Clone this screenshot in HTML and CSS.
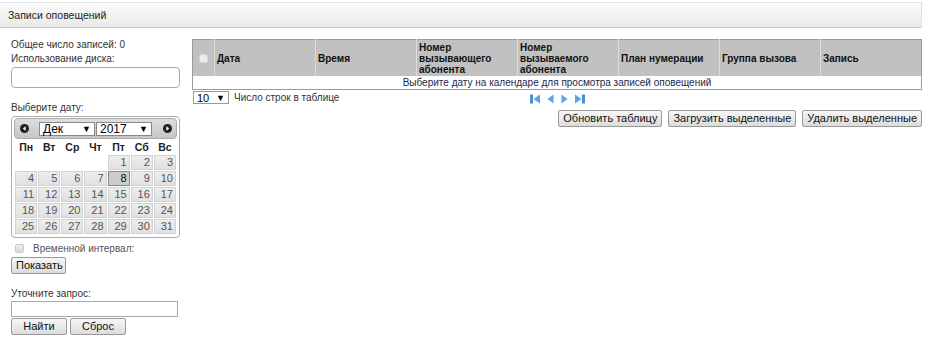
FILE: index.html
```html
<!DOCTYPE html>
<html lang="ru">
<head>
    <meta charset="UTF-8">
    <title>Записи оповещений</title>
    <link rel="stylesheet" href="styles.css">
</head>
<body>
    <div class="titlebar">Записи оповещений</div>

    <div class="main">
        <div class="sidebar">
            <div class="line">Общее число записей: 0</div>
            <div class="line">Использование диска:</div>
            <div class="disk"></div>

            <div class="label">Выберите дату:</div>
            <div class="calendar">
                <div class="cal-head">
                    <span class="cal-nav">
                        <svg width="9" height="9" viewBox="0 0 9 9"><circle cx="4.5" cy="4.5" r="4.5" fill="#222"/><path d="M5.6 2.2 L2.8 4.5 L5.6 6.8 Z" fill="#fff"/></svg>
                    </span>
                    <span class="fake-select month">Дек</span>
                    <span class="fake-select year">2017</span>
                    <span class="cal-nav">
                        <svg width="9" height="9" viewBox="0 0 9 9"><circle cx="4.5" cy="4.5" r="4.5" fill="#222"/><path d="M3.4 2.2 L6.2 4.5 L3.4 6.8 Z" fill="#fff"/></svg>
                    </span>
                </div>
                <table class="cal-grid">
                    <thead>
                        <tr><th>Пн</th><th>Вт</th><th>Ср</th><th>Чт</th><th>Пт</th><th>Сб</th><th>Вс</th></tr>
                    </thead>
                    <tbody>
                        <tr><td class="empty"></td><td class="empty"></td><td class="empty"></td><td class="empty"></td><td>1</td><td>2</td><td>3</td></tr>
                        <tr><td>4</td><td>5</td><td>6</td><td>7</td><td class="active">8</td><td>9</td><td>10</td></tr>
                        <tr><td>11</td><td>12</td><td>13</td><td>14</td><td>15</td><td>16</td><td>17</td></tr>
                        <tr><td>18</td><td>19</td><td>20</td><td>21</td><td>22</td><td>23</td><td>24</td></tr>
                        <tr><td>25</td><td>26</td><td>27</td><td>28</td><td>29</td><td>30</td><td>31</td></tr>
                    </tbody>
                </table>
            </div>

            <label class="interval"><input type="checkbox" class="check"> Временной интервал:</label>
            <button class="btn">Показать</button>

            <div class="label query-label">Уточните запрос:</div>
            <input type="text" class="query">
            <div class="btn-row">
                <button class="btn wide">Найти</button>
                <button class="btn wide">Сброс</button>
            </div>
        </div>

        <div class="content">
            <table class="records">
                <thead>
                    <tr>
                        <th class="col-check"><input type="checkbox" class="check"></th>
                        <th>Дата</th>
                        <th>Время</th>
                        <th>Номер вызывающего абонента</th>
                        <th>Номер вызываемого абонента</th>
                        <th>План нумерации</th>
                        <th>Группа вызова</th>
                        <th>Запись</th>
                    </tr>
                </thead>
                <tbody>
                    <tr><td colspan="8" class="empty-row">Выберите дату на календаре для просмотра записей оповещений</td></tr>
                </tbody>
            </table>

            <div class="pager-row">
                <div class="rows">
                    <span class="fake-select count">10</span>
                    <span>Число строк в таблице</span>
                </div>
                <div class="pager">
                    <svg width="10" height="10" viewBox="0 0 10 10"><rect x="0" y="0.5" width="3" height="9" fill="#4a90d9"/><path d="M10 0.5 L3.5 5 L10 9.5 Z" fill="#5fa3e6"/></svg>
                    <svg width="7" height="10" viewBox="0 0 7 10"><path d="M6.5 0.5 L0.5 5 L6.5 9.5 Z" fill="#5fa3e6"/></svg>
                    <svg width="7" height="10" viewBox="0 0 7 10"><path d="M0.5 0.5 L6.5 5 L0.5 9.5 Z" fill="#5fa3e6"/></svg>
                    <svg width="10" height="10" viewBox="0 0 10 10"><path d="M0 0.5 L6.5 5 L0 9.5 Z" fill="#5fa3e6"/><rect x="7" y="0.5" width="3" height="9" fill="#4a90d9"/></svg>
                </div>
                <div class="rows-spacer"></div>
            </div>

            <div class="actions">
                <button class="btn">Обновить таблицу</button>
                <button class="btn">Загрузить выделенные</button>
                <button class="btn">Удалить выделенные</button>
            </div>
        </div>
    </div>
</body>
</html>
```

FILE: styles.css
```css
body {
    margin: 0;
    font-family: "Liberation Sans", Arial, sans-serif;
    font-size: 10px;
    color: #333;
    background: #fff;
}
.titlebar {
    margin: 2px 6px 0 0;
    height: 24px;
    line-height: 24px;
    padding-left: 8px;
    border: 1px solid #e2e2e2;
    border-bottom-color: #c8c8c8;
    border-left: none;
    background: linear-gradient(#fbfbfb, #e9e9e9);
    color: #222;
    font-size: 10.5px;
}
.main {
    display: flex;
    padding: 11px 6px 0 11px;
}
.sidebar {
    width: 169px;
    flex: none;
}
.line {
    line-height: 14px;
}
.line:first-child {
    margin-top: -1px;
}
.disk {
    height: 19px;
    margin-top: 1px;
    border: 1px solid #aaa;
    border-radius: 4px;
}
.label {
    margin-top: 13px;
    line-height: 14px;
}
.calendar {
    margin-top: 1px;
    border: 1px solid #aaa;
    border-radius: 4px;
    padding: 1px 2px 2px;
}
.cal-head {
    display: flex;
    align-items: center;
    height: 19px;
    border: 1px solid #aaa;
    border-radius: 4px;
    background: linear-gradient(#dedede, #c6c6c6);
    padding: 0 0 0 5px;
}
.cal-nav {
    display: flex;
    width: 9px;
}
.fake-select {
    position: relative;
    display: inline-block;
    height: 12px;
    line-height: 12px;
    border: 1px solid #888;
    background: #fff;
    font-size: 12px;
    color: #000;
    padding-left: 3px;
    box-sizing: border-box;
}
.fake-select::after {
    content: "\25BC";
    position: absolute;
    right: 3px;
    top: 0;
    font-size: 9px;
    color: #000;
}
.fake-select.month {
    width: 56px;
    height: 14px;
    line-height: 13px;
    margin-left: 10px;
}
.fake-select.year {
    width: 56px;
    height: 14px;
    line-height: 13px;
    margin: 0 11px 0 1px;
}
.cal-grid {
    border-collapse: separate;
    border-spacing: 1px;
    margin: 0 auto;
}
.cal-grid th {
    height: 14px;
    font-weight: bold;
    color: #222;
    padding: 0;
    font-size: 10.5px;
}
.cal-grid td {
    width: 19px;
    height: 13px;
    padding: 0 2px 0 0;
    text-align: right;
    border: 1px solid #d3d3d3;
    background: linear-gradient(#ededed, #e0e0e0);
    color: #555;
    line-height: 13px;
    font-size: 11px;
}
.cal-grid td.empty {
    border-color: transparent;
    background: none;
}
.cal-grid td.active {
    border-color: #888;
    background: #ccc;
    color: #111;
}
.interval {
    display: flex;
    align-items: center;
    margin-top: 4px;
    height: 12px;
    color: #555;
}
.check {
    -webkit-appearance: none;
    appearance: none;
    width: 9px;
    height: 9px;
    margin: 0;
    border: 1px solid #c8c8c8;
    border-radius: 2px;
    background: linear-gradient(#eee, #d8d8d8);
}
.interval .check {
    margin: 0 9px 0 4px;
}
.btn {
    font-family: "Liberation Sans", Arial, sans-serif;
    font-size: 11px;
    color: #111;
    height: 17px;
    padding: 0 4px;
    line-height: 15px;
    border: 1px solid #999;
    border-radius: 2px;
    background: linear-gradient(#f7f7f7, #dcdcdc);
    margin: 0;
}
.sidebar > .btn {
    margin-top: 3px;
    width: 55px;
}
.query-label {
    margin-top: 13px;
    line-height: 14px;
}
.query {
    display: block;
    width: 167px;
    height: 16px;
    box-sizing: border-box;
    border: 1px solid #aaa;
    margin: 0;
    padding: 0;
}
.btn-row {
    display: flex;
    gap: 3px;
    margin-top: 1px;
}
.btn.wide {
    width: 56px;
}
.content {
    flex: 1;
    margin-left: 12px;
}
.records {
    width: 100%;
    border-collapse: collapse;
    border: 1px solid #9a9a9a;
    table-layout: fixed;
}
.records th {
    background: #c1c1c1;
    border-left: 1px solid #dcdcdc;
    text-align: left;
    vertical-align: middle;
    font-weight: bold;
    color: #111;
    line-height: 11px;
    height: 36px;
    padding: 0 2px;
}
.records th:first-child {
    border-left: none;
}
.records th.col-check {
    width: 21px;
    text-align: center;
    padding: 0;
}
.records th.col-check .check {
    border-color: #d4d4d4;
    background: #ececec;
    vertical-align: middle;
}
.empty-row {
    text-align: center;
    height: 13px;
    padding: 0;
    line-height: 13px;
    color: #23284a;
}
.pager-row {
    display: flex;
    align-items: center;
    margin-top: 1px;
    height: 13px;
}
.rows {
    flex: 1;
    display: flex;
    align-items: center;
    gap: 5px;
}
.rows-spacer {
    flex: 1;
}
.fake-select.count {
    width: 36px;
    height: 13px;
    margin-left: 1px;
    font-size: 11px;
    border-color: #999;
}
.pager {
    display: flex;
    gap: 7px;
    padding-top: 2px;
}
.actions {
    display: flex;
    justify-content: flex-end;
    gap: 6px;
    margin-top: 6px;
}
```
